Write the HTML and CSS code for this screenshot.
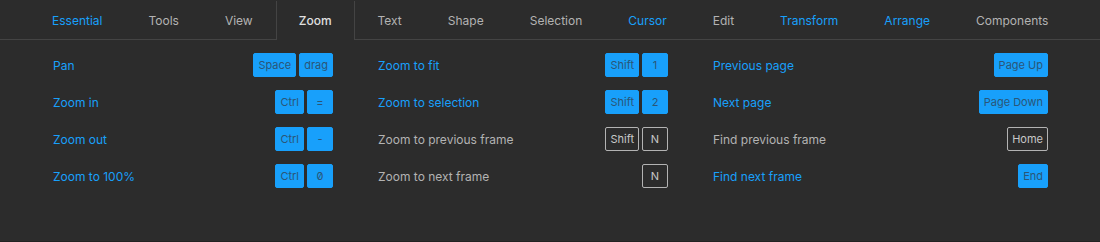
FILE: index.html
```
<!DOCTYPE html>
<html>
<head>
<meta charset="utf-8">
<link rel="stylesheet" href="styles.css">
</head>
<body>
<div class="panel">
  <nav class="tabs">
    <div class="tab hl">Essential</div>
    <div class="tab">Tools</div>
    <div class="tab">View</div>
    <div class="tab active">Zoom</div>
    <div class="tab">Text</div>
    <div class="tab">Shape</div>
    <div class="tab">Selection</div>
    <div class="tab hl">Cursor</div>
    <div class="tab">Edit</div>
    <div class="tab hl">Transform</div>
    <div class="tab hl">Arrange</div>
    <div class="tab">Components</div>
  </nav>
  <div class="content">
    <div class="col c1">
      <div class="row hl"><span class="label">Pan</span><span class="keys"><kbd class="on">Space</kbd><kbd class="on">drag</kbd></span></div>
      <div class="row hl"><span class="label">Zoom in</span><span class="keys"><kbd class="on">Ctrl</kbd><kbd class="on">=</kbd></span></div>
      <div class="row hl"><span class="label">Zoom out</span><span class="keys"><kbd class="on">Ctrl</kbd><kbd class="on">-</kbd></span></div>
      <div class="row hl"><span class="label">Zoom to 100%</span><span class="keys"><kbd class="on">Ctrl</kbd><kbd class="on">0</kbd></span></div>
    </div>
    <div class="col c2">
      <div class="row hl"><span class="label">Zoom to fit</span><span class="keys"><kbd class="on">Shift</kbd><kbd class="on">1</kbd></span></div>
      <div class="row hl"><span class="label">Zoom to selection</span><span class="keys"><kbd class="on">Shift</kbd><kbd class="on">2</kbd></span></div>
      <div class="row"><span class="label">Zoom to previous frame</span><span class="keys"><kbd>Shift</kbd><kbd>N</kbd></span></div>
      <div class="row"><span class="label">Zoom to next frame</span><span class="keys"><kbd>N</kbd></span></div>
    </div>
    <div class="col c3">
      <div class="row hl"><span class="label">Previous page</span><span class="keys"><kbd class="on">Page Up</kbd></span></div>
      <div class="row hl"><span class="label">Next page</span><span class="keys"><kbd class="on">Page Down</kbd></span></div>
      <div class="row"><span class="label">Find previous frame</span><span class="keys"><kbd>Home</kbd></span></div>
      <div class="row hl"><span class="label">Find next frame</span><span class="keys"><kbd class="on">End</kbd></span></div>
    </div>
  </div>
</div>
</body>
</html>
```
FILE: styles.css
```
html, body {
  margin: 0;
  padding: 0;
  background: #2c2c2c;
}
body {
  font-family: Inter, "Noto Sans", sans-serif;
  color: #b3b3b3;
  height: 242px;
  overflow: hidden;
}
.panel {
  height: 241px;
  border-bottom: 1px solid #222;
}
.tabs {
  display: flex;
  padding-left: 29px;
  border-bottom: 1px solid #444;
  height: 39px;
}
.tab {
  font-size: 12px;
  padding: 0 22px;
  display: flex;
  align-items: center;
  border-left: 1px solid transparent;
  border-right: 1px solid transparent;
  margin-top: 1px;
  color: #b3b3b3;
}
.tab.hl { color: #18a0fb; }
.tab.active {
  color: #e0e0e0;
  font-weight: 500;
  border-color: #444;
  background: #2c2c2c;
  height: 39px;
  margin-bottom: -1px;
}
.content {
  display: grid;
  grid-template-columns: 280px 290px 335px;
  column-gap: 45px;
  padding: 13px 0 0 53px;
}
.col {
  display: flex;
  flex-direction: column;
  gap: 13px;
}
.row {
  display: flex;
  justify-content: space-between;
  align-items: center;
  height: 24px;
  font-size: 12px;
  color: #b3b3b3;
}
.row.hl { color: #18a0fb; }
.keys {
  display: flex;
  gap: 3px;
}
kbd {
  font-family: Inter, "Noto Sans", sans-serif;
  font-feature-settings: "zero" 1;
  font-size: 11px;
  height: 24px;
  min-width: 26px;
  box-sizing: border-box;
  padding: 0 4px;
  display: flex;
  align-items: center;
  justify-content: center;
  border: 1px solid #b3b3b3;
  border-radius: 2px;
  color: #c8c8c8;
}
kbd.on {
  background: #18a0fb;
  border-color: #18a0fb;
  color: #2b5677;
}
```
